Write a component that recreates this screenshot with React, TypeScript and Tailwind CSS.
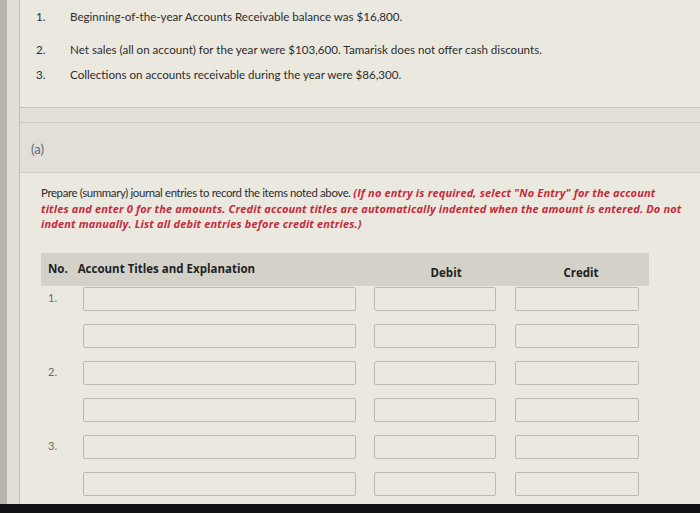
const ITEMS = [
  'Beginning-of-the-year Accounts Receivable balance was $16,800.',
  'Net sales (all on account) for the year were $103,600. Tamarisk does not offer cash discounts.',
  'Collections on accounts receivable during the year were $86,300.',
];

const ENTRIES = [1, 2, 3];

function Box({ w }: { w: string }) {
  return <div className={`${w} h-[24px] border border-[#bdb9b0] bg-[#ebe8e0] rounded-[2px]`} />;
}

function EntryRow({ label }: { label?: string }) {
  return (
    <div className="flex items-start h-[37px] shrink-0">
      <div className="w-[42px] pl-[7px] pt-[3px] text-[11px] text-[#6b6b6b]">{label}</div>
      <Box w="w-[273px]" />
      <div className="w-[18px]" />
      <Box w="w-[122px]" />
      <div className="w-[19px]" />
      <Box w="w-[124px]" />
    </div>
  );
}

export default function App() {
  return (
    <div
      className="w-[700px] h-[513px] overflow-hidden flex flex-col bg-[#e4e0d7] text-[#2d2d2d]"
      style={{ fontFamily: 'Lato, "Open Sans", sans-serif' }}
    >
      <div className="flex flex-1 min-h-0 overflow-hidden">
        <div className="w-[7px] bg-[#b9b5ac]" />
        <div className="w-[12px] bg-[#e2ded5]" />
        <div className="flex-1 flex flex-col border-l border-[#c2beb5]">
          {/* problem statement */}
          <div className="h-[108px] shrink-0 bg-[#ebe8e0] border-b border-[#c6c2b9] pt-[9px]">
            {ITEMS.map((text, i) => (
              <div key={i} className={`flex text-[11.6px] leading-[16px] ${i === 0 ? '' : i === 1 ? 'mt-[17px]' : 'mt-[9px]'}`}>
                <span className="w-[50px] pl-[16px]">{i + 1}.</span>
                <span>{text}</span>
              </div>
            ))}
          </div>

          <div className="h-[14px] shrink-0" />

          {/* part (a) */}
          <div className="flex-1 flex flex-col border-t border-[#cfcbc2]">
            <div className="h-[50px] shrink-0 bg-[#e2dfd7] border-b border-[#d0ccc3] flex items-center pl-[11px] pt-[4px] text-[13px] text-[#5b6a80]">
              (a)
            </div>
            <div className="flex-1 bg-[#ebe8e0] pl-[21px] pt-[12px]">
              <p className="text-[11.4px] leading-[15.5px] tracking-[-0.35px] whitespace-nowrap">
                Prepare (summary) journal entries to record the items noted above.{' '}
                <span
                  className="text-[#c42b3a] font-bold italic text-[11px] tracking-[0.15px]"
                  style={{ fontFamily: '"Open Sans", sans-serif' }}
                >
                  (If no entry is required, select "No Entry" for the account
                  <br />
                  titles and enter 0 for the amounts. Credit account titles are automatically indented when the amount is entered. Do not
                  <br />
                  indent manually. List all debit entries before credit entries.)
                </span>
              </p>

              <div
                className="mt-[21px] w-[608px] h-[33px] bg-[#d4d1c9] flex items-center text-[11.5px] font-bold text-[#222]"
                style={{ fontFamily: '"Open Sans", sans-serif' }}
              >
                <span className="w-[38px] pl-[7px]">No.</span>
                <span className="w-[315px]">Account Titles and Explanation</span>
                <span className="w-[140px] text-center pt-[8px]">Debit</span>
                <span className="w-[142px] text-center pt-[8px]">Credit</span>
              </div>

              <div className="pt-[1px]">
                {ENTRIES.map((n) => (
                  <div key={n}>
                    <EntryRow label={`${n}.`} />
                    <EntryRow />
                  </div>
                ))}
              </div>
            </div>
          </div>
        </div>
      </div>
      <div className="h-[9px] shrink-0 bg-[#111214]" />
    </div>
  );
}
